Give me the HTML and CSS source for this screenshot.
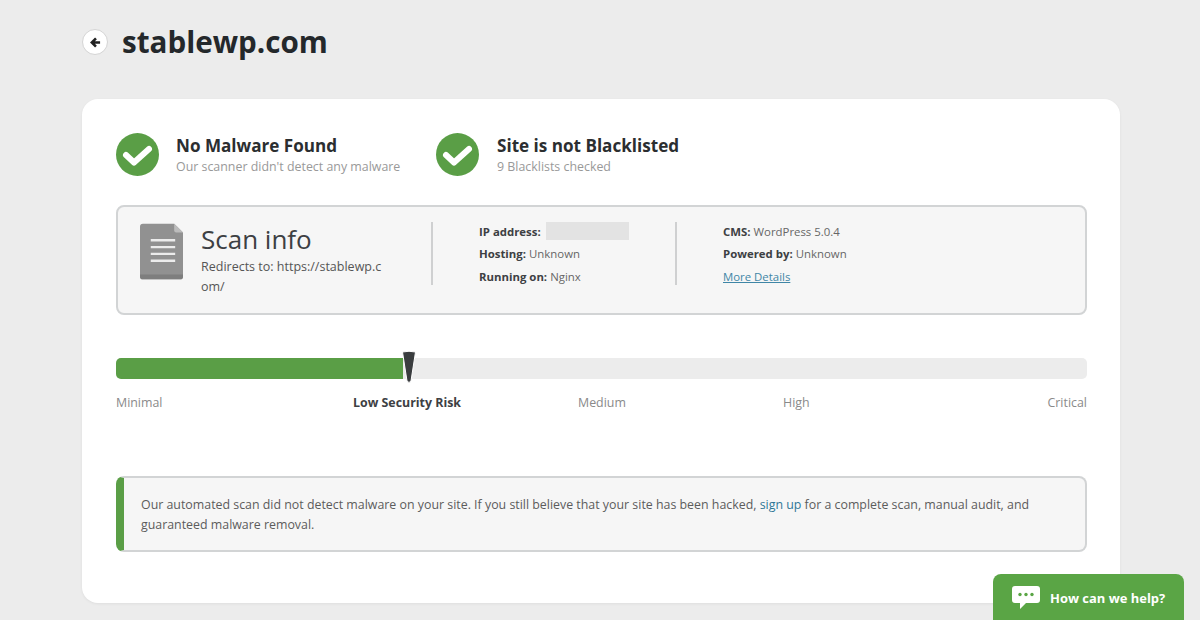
FILE: index.html
```html
<!DOCTYPE html>
<html lang="en">
<head>
<meta charset="utf-8">
<title>stablewp.com</title>
<link rel="stylesheet" href="styles.css">
</head>
<body>
<div class="page">
  <header class="head">
    <span class="back">
      <svg width="11" height="11" viewBox="0 0 12 12"><path d="M6.500 1.500 2 6 6.500 10.500M2.500 6h8.500" fill="none" stroke="#222" stroke-width="2.800"/></svg>
    </span>
    <h1 class="site">stablewp.com</h1>
  </header>
  <main class="card">
    <section class="statuses">
      <div class="status status-first">
        <svg class="check" width="43" height="43" viewBox="0 0 43 43"><circle cx="21.500" cy="21.500" r="21.500" fill="#5a9e46"/><path d="M10 22 18 29.500 33 16" fill="none" stroke="#fff" stroke-width="6" stroke-linejoin="round" stroke-linecap="round"/></svg>
        <div>
          <div class="status-title">No Malware Found</div>
          <div class="status-sub">Our scanner didn't detect any malware</div>
        </div>
      </div>
      <div class="status status-second">
        <svg class="check" width="43" height="43" viewBox="0 0 43 43"><circle cx="21.500" cy="21.500" r="21.500" fill="#5a9e46"/><path d="M10 22 18 29.500 33 16" fill="none" stroke="#fff" stroke-width="6" stroke-linejoin="round" stroke-linecap="round"/></svg>
        <div>
          <div class="status-title">Site is not Blacklisted</div>
          <div class="status-sub">9 Blacklists checked</div>
        </div>
      </div>
    </section>
    <section class="info">
      <div class="info-main">
        <svg class="doc" width="43" height="57" viewBox="0 0 44 57">
          <path d="M3 0H35L44 9V54Q44 57 41 57H3Q0 57 0 54V3Q0 0 3 0Z" fill="#919191"/>
          <path d="M35 0 44 9H37Q35 9 35 7Z" fill="#bcbcbc"/>
          <path d="M0 52H44V54Q44 57 41 57H3Q0 57 0 54Z" fill="#7e7e7e"/>
          <path d="M11 17H36M11 24H36M11 31H36M11 38H36" stroke="#ececec" stroke-width="2.400"/>
        </svg>
        <div class="scan">
          <div class="scan-title">Scan info</div>
          <div class="scan-link">Redirects to: https://stablewp.c<br>om/</div>
        </div>
      </div>
      <div class="info-col col-a">
        <div class="row"><b>IP address:</b><span class="blur"></span></div>
        <div class="row"><b>Hosting:</b> Unknown</div>
        <div class="row"><b>Running on:</b> Nginx</div>
      </div>
      <div class="info-col col-b">
        <div class="row"><b>CMS:</b> WordPress 5.0.4</div>
        <div class="row"><b>Powered by:</b> Unknown</div>
        <div class="row"><a class="more" href="#">More Details</a></div>
      </div>
    </section>
    <section class="risk">
      <div class="track">
        <div class="fill"></div>
        <svg class="needle" width="16" height="33" viewBox="0 0 16 33"><path d="M1.500 1Q8 -0.500 14.500 1L10 30Q8 33 6 30Z" fill="#3a3d3f" stroke="#fff" stroke-width="1"/></svg>
      </div>
      <div class="levels">
        <span>Minimal</span>
        <span class="current">Low Security Risk</span>
        <span>Medium</span>
        <span>High</span>
        <span>Critical</span>
      </div>
    </section>
    <section class="alert">
      <p class="alert-text">Our automated scan did not detect malware on your site. If you still believe that your site has been hacked, <a href="#">sign up</a> for a complete scan, manual audit, and guaranteed malware removal.</p>
    </section>
  </main>
</div>
<div class="chat">
  <svg width="28" height="23" viewBox="0 0 28 23"><path d="M3 0H25Q28 0 28 3V14Q28 17 25 17H14L8 23V17H3Q0 17 0 14V3Q0 0 3 0Z" fill="#fff"/><circle cx="8" cy="8.500" r="1.700" fill="#5aa545"/><circle cx="14" cy="8.500" r="1.700" fill="#5aa545"/><circle cx="20" cy="8.500" r="1.700" fill="#5aa545"/></svg>
  <span>How can we help?</span>
</div>
</body>
</html>
```
FILE: styles.css
```css
* { box-sizing: border-box; }
html, body { margin: 0; height: 620px; overflow: hidden; }
body {
  background: #ececec;
  font-family: "Open Sans", "Liberation Sans", sans-serif;
  color: #666;
}
.page { padding: 20px 80px 0 82px; }
.head { display: flex; align-items: center; height: 44px; gap: 14px; }
.back {
  width: 26px; height: 26px; border-radius: 50%;
  background: #fff; border: 1px solid #d4d4d4;
  display: flex; align-items: center; justify-content: center;
}
.site { margin: 0; font-size: 29.600px; line-height: 44px; font-weight: 700; color: #24282b; }
.card {
  margin-top: 35px; height: 504px; background: #fff;
  border-radius: 16px; padding: 34px 33px 0 34px;
  box-shadow: 0 1px 3px rgba(0,0,0,.06);
}
.statuses { display: flex; height: 43px; }
.status { display: flex; align-items: flex-start; gap: 17px; }
.status-first { width: 320px; }
.status-second { gap: 18px; }
.check { flex: none; }
.status-title { font-size: 17.100px; line-height: 24px; padding-top: 1px; font-weight: 700; color: #2b2e30; }
.status-sub { font-size: 12.400px; line-height: 20px; margin-top: -1px; color: #999; }
.info {
  margin-top: 29px; height: 110px; display: flex; align-items: flex-start;
  background: #f6f6f6; border: 2px solid #d2d4d5; border-radius: 8px;
}
.info-main { width: 313px; display: flex; padding: 16px 0 0 22px; gap: 18px; }
.doc { flex: none; }
.scan-title { font-size: 26px; line-height: 36px; color: #3d4043; margin-top: -2px; }
.scan-link { font-size: 12.500px; line-height: 20px; color: #555; }
.info-col {
  margin-top: 15px; height: 63px; font-size: 11.400px; color: #666;
  border-left: 2px solid #cfd0d1;
}
.col-a { width: 244px; padding-left: 46px; }
.col-b { padding-left: 46px; }
.row { height: 22.500px; line-height: 19px; white-space: nowrap; display: flex; align-items: center; gap: 3px; }
.row:first-child { margin-top: -2px; }
.row b { color: #3d4043; font-weight: 700; }
.blur { width: 83px; height: 18px; background: #e3e3e3; margin-left: 2px; }
.more { color: #3f86a6; text-decoration: underline; }
.risk { margin-top: 43px; }
.track { position: relative; height: 21px; background: #ececec; border-radius: 5px; }
.fill { width: 287px; height: 21px; background: #5a9e46; border-radius: 5px 0 0 5px; }
.needle { position: absolute; left: 285px; top: -7px; }
.levels {
  display: grid; grid-template-columns: 237px 225px 205px 1fr auto; margin-top: 14px;
  font-size: 12.400px; line-height: 20px; color: #8a8a8a;
}
.current { font-weight: 700; color: #3d4043; }
.alert {
  margin-top: 63px; height: 76px; padding: 17px 40px 0 17px;
  background: #f6f6f6; border: 2px solid #d2d4d5; border-left: 8px solid #5a9e46;
  border-radius: 8px;
}
.alert-text { margin: 0; font-size: 12.380px; line-height: 20px; color: #5c5c5c; }
.alert a { color: #2f7696; text-decoration: none; }
.chat {
  position: absolute; left: 993px; top: 574px; width: 191px; height: 46px;
  background: #5aa545; border-radius: 8px 8px 0 0;
  display: flex; align-items: center; gap: 10px; padding: 1px 0 0 19px;
  color: #fff; font-size: 12.950px; font-weight: 700;
}
```
